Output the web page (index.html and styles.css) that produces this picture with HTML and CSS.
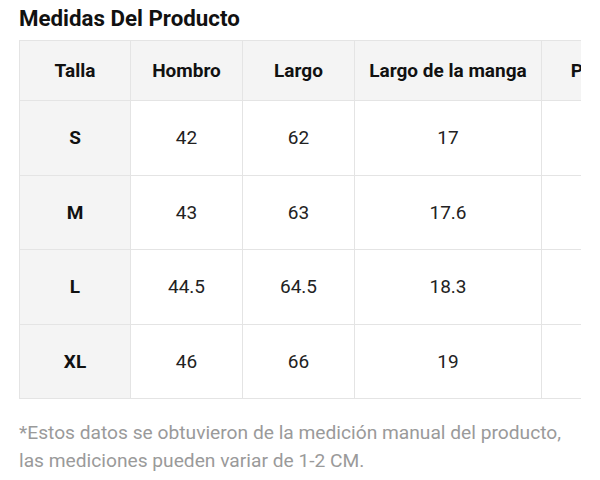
FILE: index.html
```html
<!DOCTYPE html>
<html lang="es">
<head>
<meta charset="utf-8">
<link rel="stylesheet" href="styles.css">
</head>
<body>
<div class="page">
  <h1 class="title">Medidas Del Producto</h1>
  <div class="table-wrap">
    <table class="sizes">
      <colgroup>
        <col class="c1"><col class="c2"><col class="c3"><col class="c4"><col class="c5">
      </colgroup>
      <thead>
        <tr><th>Talla</th><th>Hombro</th><th>Largo</th><th>Largo de la manga</th><th>Pecho</th></tr>
      </thead>
      <tbody>
        <tr><th>S</th><td>42</td><td>62</td><td>17</td><td></td></tr>
        <tr><th>M</th><td>43</td><td>63</td><td>17.6</td><td></td></tr>
        <tr><th>L</th><td>44.5</td><td>64.5</td><td>18.3</td><td></td></tr>
        <tr><th>XL</th><td>46</td><td>66</td><td>19</td><td></td></tr>
      </tbody>
    </table>
  </div>
  <p class="note">*Estos datos se obtuvieron de la medición manual del producto, las mediciones pueden variar de 1-2 CM.</p>
</div>
</body>
</html>
```

FILE: styles.css
```css
html, body {
  margin: 0;
  padding: 0;
  background: #ffffff;
}
body {
  font-family: Roboto, "Liberation Sans", Arial, sans-serif;
  color: #111111;
}
.page {
  padding: 4px 0 0 19px;
}
.title {
  margin: 0;
  font-size: 22.3px;
  font-weight: 700;
  line-height: 28px;
  color: #111111;
}
.table-wrap {
  margin-top: 8px;
  width: 562px;
  overflow: hidden;
}
.sizes {
  border-collapse: collapse;
  table-layout: fixed;
  width: 634px;
}
.c1 { width: 111px; }
.c2 { width: 112px; }
.c3 { width: 112px; }
.c4 { width: 187px; }
.c5 { width: 112px; }
.sizes th, .sizes td {
  border: 1px solid #e4e4e4;
  text-align: center;
  font-size: 19px;
  padding: 0;
  white-space: nowrap;
}
.sizes thead th {
  height: 59px;
  background: #f4f4f4;
  font-weight: 700;
  color: #111111;
}
.sizes tbody th {
  background: #f4f4f4;
  font-weight: 700;
  color: #111111;
}
.sizes tbody td {
  font-weight: 400;
  color: #222222;
}
.sizes tbody tr {
  height: 74.5px;
}
.note {
  margin: 20px 0 0 0;
  width: 552px;
  font-size: 19.2px;
  line-height: 28px;
  color: #9a9a9a;
}
```
